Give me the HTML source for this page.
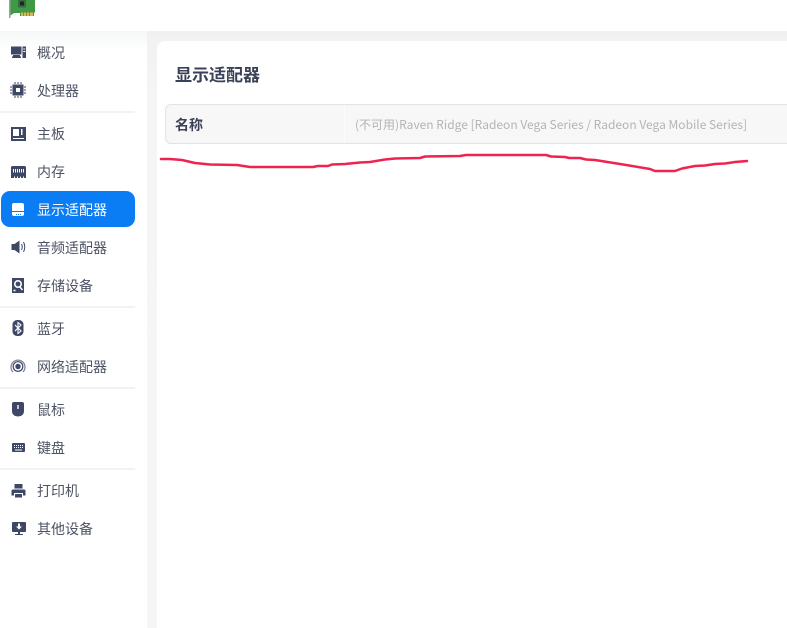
<!DOCTYPE html>
<html lang="zh"><head><meta charset="utf-8"><style>
html,body{margin:0;padding:0}
body{width:787px;height:628px;position:relative;overflow:hidden;background:#fff;font-family:"Noto Sans CJK SC","Liberation Sans",sans-serif}
.a{position:absolute}
.side-shade{left:0;top:31px;width:147px;height:20px;background:linear-gradient(#f6f7f8,#fff)}
.bg{left:147px;top:31px;width:640px;height:597px;background:linear-gradient(#f1f1f1,#f5f5f5 60px,#f6f6f6)}
.card{left:157px;top:41px;width:630px;height:587px;background:#fff;border-top-left-radius:8px}
.sep{left:0;width:135px;height:2px;background:#f2f2f3}
.item{left:37px;font-size:14px;line-height:20px;color:#4d5363;white-space:nowrap}
.act{left:1px;top:191px;width:134px;height:36px;background:#0a7df5;border-radius:9px}
svg.i{position:absolute;left:10px;width:16px;height:16px;fill:#3e4766}
</style></head><body>
<svg class="a" style="left:9px;top:0" width="28" height="18" viewBox="0 0 28 18"><path d="M0 0h1.500v18H0z" fill="#9aa39a"/><path d="M1.500 0H26v12.500h-1V16H11v-3H5l-3.500 2.500z" fill="#3f9a45"/><rect x="9" y="0" width="8" height="7.500" fill="#3a6a42"/><rect x="11" y="1.500" width="4" height="4" fill="#1b2a1e"/><path d="M12 12.500h12V16H12z" fill="#dcb84e"/><path d="M14 12.500h1V16h-1zM17 12.500h1V16h-1zM20 12.500h1V16h-1z" fill="#8a8a3a"/></svg>
<div class="a side-shade"></div>
<div class="a bg"></div><div class="a card"></div>
<div class="a sep" style="top:111px"></div><div class="a sep" style="top:306px"></div><div class="a sep" style="top:387px"></div><div class="a sep" style="top:468px"></div>
<div class="a act"></div>

<svg class="i" style="top:45px" viewBox="0 0 16 16"><path d="M1 1.500h10.500v8H1zM3 10h7v1.500h1V13H2v-1.500h1zM12.500 1.500h3.500v11.500h-3.500zM13.300 3.500v1h2v-1zM13.300 6v1h2V6z"/></svg>
<div class="a item" style="top:43px">概况</div>
<svg class="i" style="top:82px" viewBox="0 0 16 16"><path fill-rule="evenodd" d="M2.500 2.500h11v11h-11zM6 6v4h4V6zM4.500 0h1v2h-1zM7.500 0h1v2h-1zM10.500 0h1v2h-1zM4.500 14h1v2h-1zM7.500 14h1v2h-1zM10.500 14h1v2h-1zM0 4.500h2v1H0zM0 7.500h2v1H0zM0 10.500h2v1H0zM14 4.500h2v1h-2zM14 7.500h2v1h-2zM14 10.500h2v1h-2z"/></svg>
<div class="a item" style="top:81px">处理器</div>
<svg class="i" style="top:126px" viewBox="0 0 16 16"><path fill-rule="evenodd" d="M1 1h15v14H1zM3 3v7h6V3zM11 3v6h1.500V3zM3 12v1h11v-1z"/></svg>
<div class="a item" style="top:124px">主板</div>
<svg class="i" style="top:164px" viewBox="0 0 16 16"><path fill-rule="evenodd" d="M2 2h13l1 1v11h-2v-1.500h-1V14h-2v-1.500H10V14H8v-1.500H7V14H5v-1.500H4V14H1V3zM3 5v3.500h1V5zM5 5v3.500h1V5zM7 5v3.500h1V5zM9 5v3.500h1V5zM11 5v3.500h1V5zM13 5v3.500h1V5z"/></svg>
<div class="a item" style="top:162px">内存</div>
<svg class="i" style="top:201px;fill:#fff" viewBox="0 0 16 16"><path fill-rule="evenodd" d="M4 2h8q2 0 2 2v6H2V4q0-2 2-2zM2 11h12v2q0 2-2 2H4q-2 0-2-2zM6 13v1h1v-1zM8 13v1h1v-1zM10 13v1h1v-1z"/></svg>
<div class="a item" style="top:200px;color:#fff">显示适配器</div>
<svg class="i" style="top:239px" viewBox="0 0 16 16"><path d="M1.500 5h3l5-3.500v13l-5-3.500h-3z"/><path d="M11.500 5q1.500 3 0 6M13.500 3q2.500 5 0 10" fill="none" stroke="#3e4766"/></svg>
<div class="a item" style="top:238px">音频适配器</div>
<svg class="i" style="top:277px" viewBox="0 0 16 16"><path fill-rule="evenodd" d="M2 1h12v15H2z"/><circle cx="8" cy="7" r="3.200" fill="none" stroke="#fff" stroke-width="1.600"/><path d="M9.500 9.500l3 3.500M3.500 13.500h2" stroke="#fff" stroke-width="1.500" fill="none"/></svg>
<div class="a item" style="top:276px">存储设备</div>
<svg class="i" style="top:320px" viewBox="0 0 16 16"><rect x="2.500" y="0" width="11" height="16" rx="4.500"/><path d="M5 5l6 6-3 2.500v-11L11 5l-6 6" fill="none" stroke="#fff" stroke-width="1.100"/></svg>
<div class="a item" style="top:319px">蓝牙</div>
<svg class="i" style="top:359px" viewBox="0 0 16 16"><circle cx="8" cy="7.500" r="2.700"/><circle cx="8" cy="7.500" r="4.800" fill="none" stroke="#3e4766" stroke-width="1.200"/><path d="M3 13a7 7 0 1 1 10 0" fill="none" stroke="#7f869b" stroke-width="1.300"/></svg>
<div class="a item" style="top:357px">网络适配器</div>
<svg class="i" style="top:401px" viewBox="0 0 16 16"><path fill-rule="evenodd" d="M2 3Q2 1 4 1h8q2 0 2 2v7q0 5-6 5.500Q2 15 2 10zM7.300 4v4h1.400V4z"/></svg>
<div class="a item" style="top:400px">鼠标</div>
<svg class="i" style="top:440px" viewBox="0 0 16 16"><path fill-rule="evenodd" d="M3 3h11q1 0 1 1v7q0 1-1 1H3q-1 0-1-1V4q0-1 1-1zM4 5v1h1V5zM6 5v1h1V5zM8 5v1h1V5zM10 5v1h1V5zM12 5v1h1V5zM4 7v1h1V7zM6 7v1h1V7zM8 7v1h1V7zM10 7v1h1V7zM12 7v1h1V7zM5 9.500v1h7v-1z"/></svg>
<div class="a item" style="top:438px">键盘</div>
<svg class="i" style="top:483px" viewBox="0 0 16 16"><path fill-rule="evenodd" d="M4.500 1h8v4.500h-8zM3 6.500h11q1.500 0 1.500 1.500v4.500H13V10H4v2.500H1.500V8Q1.500 6.500 3 6.500zM5 11h7v3.500H5z"/></svg>
<div class="a item" style="top:481px">打印机</div>
<svg class="i" style="top:520px" viewBox="0 0 16 16"><path fill-rule="evenodd" d="M3 2h12q1 0 1 1v8q0 1-1 1H3q-1 0-1-1V3q0-1 1-1zM8 3.500v3H6l3 3 3-3h-2v-3zM8 12h2v2H8zM5 14h8v1H5z"/></svg>
<div class="a item" style="top:519px">其他设备</div>

<div class="a" style="left:175px;top:62px;font-size:17px;font-weight:700;line-height:23px;color:#3b4257">显示适配器</div>
<div class="a" style="left:165px;top:104px;width:630px;height:38px;background:#f7f7f7;border:1px solid #e3e3e3;border-radius:6px"></div>
<div class="a" style="left:344px;top:105px;width:1px;height:38px;background:#fbfbfb"></div>
<div class="a" style="left:175px;top:115px;font-size:14px;font-weight:700;line-height:20px;color:#3b4257">名称</div>
<div class="a" style="left:355px;top:115px;font-size:12px;line-height:20px;color:#b4b4b4;white-space:nowrap">(不可用)Raven Ridge [Radeon Vega Series / Radeon Vega Mobile Series]</div>

<svg class="a" style="left:0;top:0" width="787" height="628"><polyline fill="none" stroke="#ee2350" stroke-width="2.500" stroke-linecap="round" stroke-linejoin="round" points="161,159 170,159 182,160 195,163 210,164.500 237,165 250,167 270,167 300,167 313,167 318,166 328,166 332,164.500 345,164 360,162.500 370,162 385,159.500 395,158.500 420,158 425,156.500 460,156 466,155 500,155 546,155 551,156.500 565,157 569,158 580,158 586,159.500 595,160 620,164 650,169 655,171 675,171 682,168.500 695,166 705,165.500 715,164 725,163.500 735,162 747,161"/></svg>
</body></html>
